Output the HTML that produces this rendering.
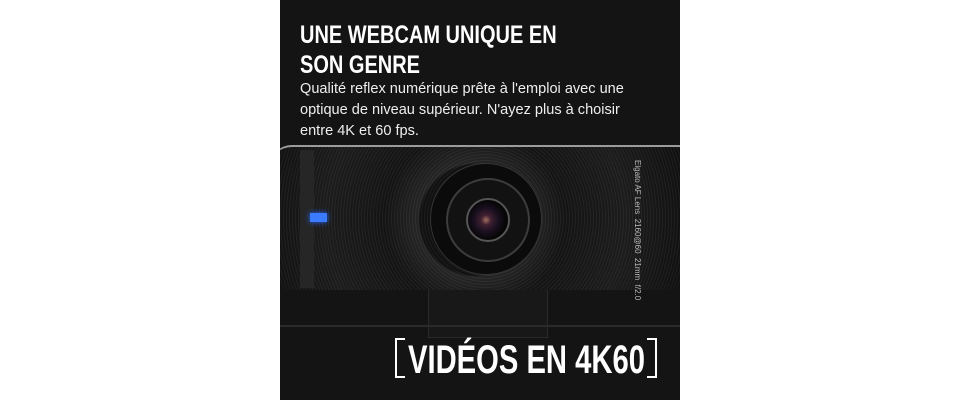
<!DOCTYPE html>
<html><head><style>
body{margin:0;width:960px;height:400px;background:#fff;overflow:hidden;position:relative;font-family:"Liberation Sans",sans-serif}
#sq{position:absolute;left:280px;top:0;width:400px;height:400px;background:#141414;overflow:hidden}
.h{position:absolute;left:20px;color:#fff;font-weight:bold;font-size:25px;transform:scaleX(0.8);transform-origin:left top;white-space:nowrap;line-height:30px}
.p{position:absolute;left:20px;top:78px;color:#eee;font-size:15px;line-height:21px;white-space:nowrap;transform:scaleX(0.97);transform-origin:left top}
.cam{position:absolute;left:-10px;top:145px;width:430px;height:145px;border-radius:22px;background:radial-gradient(circle at 205px 73px,#111 0,#111 55px,#262626 57px,#141414 90px,#1c1c1c 150px,#0a0a0a 250px);border-top:2px solid #9a9a9a;box-sizing:border-box}
.rings{position:absolute;left:-10px;top:145px;width:430px;height:145px;border-radius:22px;background:repeating-radial-gradient(circle at 215px 73px,rgba(255,255,255,0.05) 0 1px,transparent 1px 3px)}
.lens{position:absolute;border-radius:50%}
.t{position:absolute;left:128px;top:340px;color:#fff;font-weight:bold;font-size:40px;transform:scaleX(0.73);transform-origin:left top;white-space:nowrap;line-height:40px}
.br{position:absolute;width:10px;height:40px;border:2px solid #fff;box-sizing:border-box}
</style></head><body>
<div id="sq">
<div class="h" style="top:20px">UNE WEBCAM UNIQUE EN</div>
<div class="h" style="top:50px">SON GENRE</div>
<div class="p">Qualité reflex numérique prête à l'emploi avec une<br>optique de niveau supérieur. N'ayez plus à choisir<br>entre 4K et 60 fps.</div>
<div style="position:absolute;left:148px;top:288px;width:118px;height:48px;background:#181818;border:1px solid #2a2a2a"></div>
<div style="position:absolute;left:0;top:325px;width:400px;height:2px;background:#2a2a2a"></div>
<div class="cam"></div>
<div class="rings"></div>
<div style="position:absolute;left:20px;top:150px;width:14px;height:138px;background:#262626"></div>
<div style="position:absolute;left:30px;top:213px;width:17px;height:9px;background:#3a7bff;box-shadow:0 0 6px #2a6aff"></div>
<div class="lens" style="left:150px;top:163px;width:110px;height:110px;background:#0b0b0b;border:1px solid #333"></div>
<div class="lens" style="left:166px;top:178px;width:80px;height:80px;background:#121212;border:2px solid #3c3c3c"></div>
<div class="lens" style="left:186px;top:198px;width:40px;height:40px;background:radial-gradient(circle at 45% 50%,#a07060 0,#402030 5px,#1a1020 12px,#050505 20px);border:2px solid #555"></div>
<div style="position:absolute;left:362px;top:160px;color:#bbb;font-size:8px;transform:rotate(90deg);transform-origin:left top;white-space:nowrap">Elgato AF Lens &nbsp;2160@60 &nbsp;21mm &nbsp;f/2.0</div>
<div class="br" style="left:115px;top:338px;border-right:none"></div>
<div class="br" style="left:367px;top:338px;border-left:none"></div>
<div class="t">VIDÉOS EN 4K60</div>
</div>
</body></html>
